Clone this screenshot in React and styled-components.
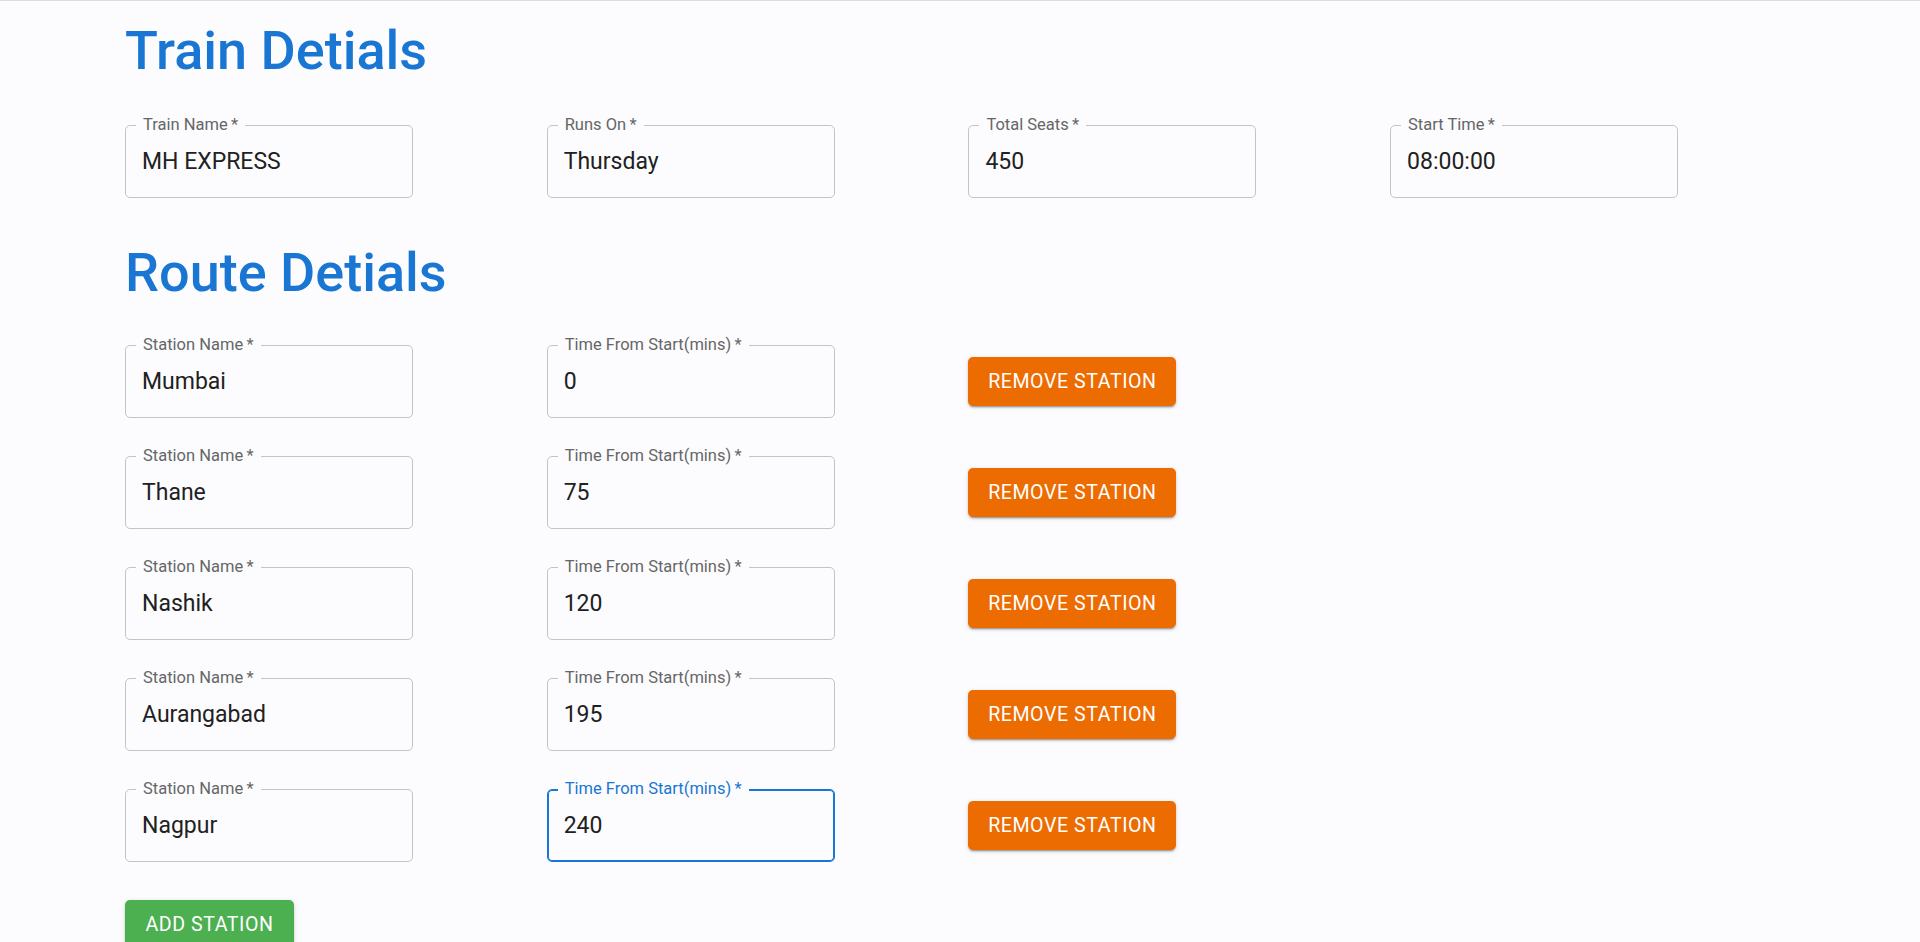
import React from "react";
import styled, { createGlobalStyle, css } from "styled-components";

const GlobalStyle = createGlobalStyle`
    html, body {
        margin: 0;
        padding: 0;
        background: #fcfcfe;
        font-family: Roboto, "Noto Sans", "Liberation Sans", sans-serif;
    }
    * {
        box-sizing: border-box;
    }
    ::-webkit-scrollbar {
        width: 21px;
        background: #f0f0f0;
    }
    ::-webkit-scrollbar-thumb {
        background: #c1c1c1;
        background-clip: padding-box;
        border: 2px solid transparent;
        border-width: 0 2px;
    }
    ::-webkit-scrollbar-button:single-button {
        display: block;
        height: 17px;
        background: #f0f0f0;
    }
`;

const Page = styled.div`
    border-top: 1px solid #dadce0;
    padding: 0 0 60px 125px;
`;

const SectionTitle = styled.h2`
    margin: ${(p) => p.$top}px 0 0;
    font-size: 54px;
    line-height: 1;
    font-weight: 500;
    color: #1976d2;
`;

const FieldGrid = styled.div`
    display: grid;
    grid-template-columns: repeat(4, 421.7px);
    margin-top: 47px;
`;

const StationList = styled.div`
    display: flex;
    flex-direction: column;
    gap: 38px;
    margin-top: 45px;
`;

const StationRow = styled.div`
    display: grid;
    grid-template-columns: 421.7px 421.7px auto;
    align-items: center;
`;

const Outline = styled.div`
    position: relative;
    width: 288px;
    height: 73px;
    border: 1px solid #c4c4c4;
    border-radius: 5px;
    ${(p) =>
        p.$focused &&
        css`
            border-color: #1976d2;
            box-shadow: inset 0 0 0 1px #1976d2;
        `}
`;

const FloatLabel = styled.label`
    position: absolute;
    top: -9px;
    left: 10px;
    padding: 0 7px;
    background: #fcfcfe;
    font-size: 16.5px;
    line-height: 1;
    color: ${(p) => (p.$focused ? "#1976d2" : "#666666")};
    white-space: nowrap;
`;

const Input = styled.input`
    width: 100%;
    height: 100%;
    padding: 0 16px 1px;
    border: none;
    outline: none;
    background: transparent;
    font-family: inherit;
    font-size: 23px;
    color: #212121;
    caret-color: #111;
`;

const ActionButton = styled.button`
    width: ${(p) => p.$width}px;
    height: 49px;
    padding: 0;
    border: none;
    border-radius: 5px;
    background: ${(p) => p.$bg};
    color: #fff;
    font-family: inherit;
    font-size: 19.6px;
    font-weight: 400;
    letter-spacing: 0.56px;
    text-transform: uppercase;
    cursor: pointer;
    box-shadow: 0 3px 1px -2px rgba(0, 0, 0, 0.2), 0 2px 2px 0 rgba(0, 0, 0, 0.14),
        0 1px 5px 0 rgba(0, 0, 0, 0.12);
`;

const AddButton = styled(ActionButton)`
    margin-top: 38px;
`;

function TextField({ label, value, focused }) {
    return (
        <Outline $focused={focused}>
            <FloatLabel $focused={focused}>{label}&thinsp;*</FloatLabel>
            <Input defaultValue={value} autoFocus={focused} />
        </Outline>
    );
}

const trainFields = [
    { label: "Train Name", value: "MH EXPRESS" },
    { label: "Runs On", value: "Thursday" },
    { label: "Total Seats", value: "450" },
    { label: "Start Time", value: "08:00:00" },
];

const stations = [
    { name: "Mumbai", time: "0" },
    { name: "Thane", time: "75" },
    { name: "Nashik", time: "120" },
    { name: "Aurangabad", time: "195" },
    { name: "Nagpur", time: "240" },
];

export default function App() {
    return (
        <>
            <GlobalStyle />
            <Page>
                <SectionTitle $top={23}>Train Detials</SectionTitle>
                <FieldGrid>
                    {trainFields.map((f) => (
                        <TextField key={f.label} label={f.label} value={f.value} />
                    ))}
                </FieldGrid>

                <SectionTitle $top={48}>Route Detials</SectionTitle>
                <StationList>
                    {stations.map((s, i) => (
                        <StationRow key={s.name}>
                            <TextField label="Station Name" value={s.name} />
                            <TextField
                                label="Time From Start(mins)"
                                value={s.time}
                                focused={i === stations.length - 1}
                            />
                            <ActionButton $width={208} $bg="#ed6c02">
                                Remove Station
                            </ActionButton>
                        </StationRow>
                    ))}
                </StationList>
                <AddButton $width={169} $bg="#4caf50">
                    Add Station
                </AddButton>
            </Page>
        </>
    );
}
